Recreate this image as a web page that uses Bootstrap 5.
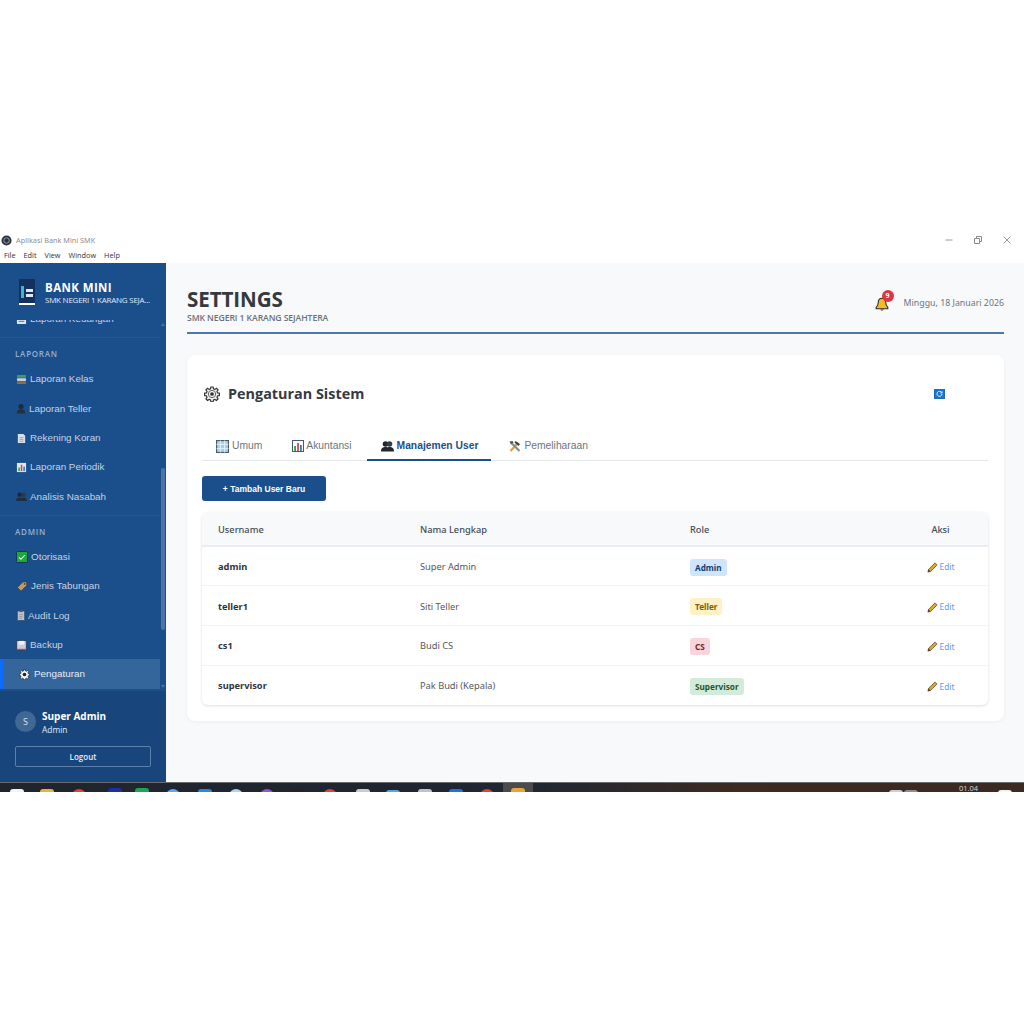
<!DOCTYPE html>
<html lang="en">
<head>
    <meta charset="UTF-8">
    <meta name="viewport" content="width=device-width, initial-scale=1.0">
    <title>Aplikasi Bank Mini SMK</title>
    <link href="https://cdn.jsdelivr.net/npm/bootstrap@5.3.3/dist/css/bootstrap.min.css" rel="stylesheet">
    <style>
        html, body { height: 1024px; overflow: hidden; background: #fff; }
        body { font-family: "Noto Sans", "Open Sans", sans-serif; padding-top: 233px; }
        .win-frame { height: 559px; width: 1024px; overflow: hidden; }

        /* window title + menu */
        .title-row { height: 14px; padding-left: 1px; font-size: 7.3px; color: #8d8f93; }
        .win-btns { gap: 19px; padding-right: 12px; color: #8a8a8a; }
        .menu-row { height: 16px; padding-left: 4px; gap: 8px; font-size: 7.3px; color: #333; font-family: "Open Sans", sans-serif; }

        .app-body { height: 519px; }
        .side-panel { width: 166px; background: #1a4f8b; color: #fff; flex-shrink: 0; }
        .side-head { height: 57px; padding: 16px 0 0 19px; gap: 10px; position: relative; z-index: 1; background: #1a4f8b; }
        .brand-name { font-size: 11.5px; font-weight: 700; letter-spacing: .4px; line-height: 13px; font-family: "Open Sans", sans-serif; margin-top: 2px; }
        .brand-sub { font-size: 8px; line-height: 10px; color: #e3eaf3; white-space: nowrap; font-family: "Open Sans", sans-serif; margin-top: 1px; letter-spacing: -.24px; }
        .side-scroll { height: 370px; overflow: hidden; justify-content: flex-end; }
        .side-group { border-bottom: 1px solid #24588f; padding-bottom: 4px; margin-right: 6px; flex-shrink: 0; }
        .side-group:last-child { border-bottom: 0; padding-bottom: 1px; }
        .side-label { font-size: 8px; font-weight: 600; letter-spacing: .75px; color: #98b0cd; padding: 10px 0 5px 15px; line-height: 11px; font-family: "Open Sans", sans-serif; }
        .side-link { display: flex; align-items: center; height: 29.35px; padding: 2px 0 0 16px; gap: 3px; font-size: 9.85px; color: #c4d2e4; text-decoration: none; font-family: "Liberation Sans", sans-serif; }
        .side-link.is-on { background: #34659b; border-left: 3px solid #0d6efd; padding: 0 0 0 16px; gap: 4px; height: 30px; color: #e6edf6; }
        .side-link.tight-gap { gap: 2px; }
        .scroll-thumb { position: absolute; right: 1px; top: 148px; width: 4px; height: 162px; background: #4a75a6; border-radius: 2px; }
        .scroll-up, .scroll-down { position: absolute; right: 1px; width: 0; height: 0; border-left: 2px solid transparent; border-right: 2px solid transparent; }
        .scroll-up { top: 3px; border-bottom: 3px solid #4a75a6; }
        .scroll-down { bottom: 2px; border-top: 3px solid #4a75a6; }
        .side-foot { height: 92px; background: #18467c; padding: 19px 5px 0 15px; border-top: 1px solid #1c4f88; }
        .user-row { gap: 6px; }
        .user-dot { width: 21px; height: 21px; border-radius: 50%; background: #3f6894; font-size: 9px; color: #d5e0ec; margin-top: 1px; }
        .user-name { font-size: 10px; font-weight: 700; line-height: 12px; font-family: "Open Sans", sans-serif; }
        .user-role { font-size: 8.400px; line-height: 11px; margin-top: 2px; color: #e3eaf3; font-family: "Open Sans", sans-serif; }
        .logout-btn { display: block; width: 136px; height: 21px; margin-top: 11px; padding: 0; font-size: 8px; font-weight: 600; line-height: 18px; color: #e8eef6; border: 1px solid #5a80ab; border-radius: 2px; background: transparent; font-family: "Open Sans", sans-serif; }

        .main-pane { background: #f8f9fb; padding: 24px 20px 0 21px; min-width: 0; }
        .page-top { height: 47px; border-bottom: 2px solid #5077a8; margin-bottom: 21px; }
        .page-title { font-size: 20.600px; font-weight: 700; line-height: 24px; color: #343a40; margin: 0; font-family: "Open Sans", sans-serif; letter-spacing: -.1px; }
        .page-sub { font-size: 8.650px; font-weight: 600; color: #6c7178; line-height: 11px; margin-top: 2px; letter-spacing: -.08px; font-family: "Open Sans", sans-serif; }
        .page-right { padding-bottom: 11px; }
        .date-txt { font-size: 8.800px; color: #6c757d; font-family: "Noto Sans", sans-serif; }
        .bell-wrap { position: relative; width: 14px; height: 15px; margin-right: 15px; }
        .bell-count { position: absolute; left: 7px; top: -7px; width: 12px; height: 12px; border-radius: 50%; background: #dc3545; color: #fff; font-size: 7px; font-weight: 700; line-height: 12px; text-align: center; }

        .panel-box { height: 366px; background: #fff; border-radius: 8px; box-shadow: 0 1px 4px rgba(0,0,0,.05); padding: 28px 16px 0 15px; }
        .panel-head { height: 22px; gap: 8px; padding-left: 2px; }
        .panel-title { font-size: 14.4px; font-weight: 700; color: #343a40; margin: 0; font-family: "Open Sans", sans-serif; }
        .refresh-ico { position: absolute; left: 732px; top: 6px; }
        .tab-row { margin-top: 30px; height: 26px; border-bottom: 1px solid #e4e7ea; }
        .tab-item { display: flex; align-items: center; gap: 3px; height: 26px; padding: 0 13px 4px 14px; font-size: 10.300px; color: #6c757d; font-family: "Liberation Sans", sans-serif; text-decoration: none; }
        .tab-item.is-on { color: #1a4f8b; font-weight: 700; border-bottom: 2px solid #1a4f8b; padding-bottom: 2px; }
        .tab-akun { padding-left: 17px; padding-right: 15px; gap: 2px; }
        .tab-rawat { padding-left: 18px; }
        .add-btn { width: 124px; height: 25px; margin-top: 15px; padding: 0; font-size: 8.5px; font-weight: 700; line-height: 24px; background: #1a4f8b; border: 0; border-radius: 3px; color: #fff; font-family: "Liberation Sans", sans-serif; }
        .add-btn:hover { background: #1a4f8b; }

        .user-table-wrap { margin-top: 11px; border-radius: 6px; box-shadow: 0 1px 3px rgba(0,0,0,.14); overflow: hidden; }
        .user-table { margin: 0; font-size: 9.250px; table-layout: fixed; color: #495057; }
        .col-uname { width: 202px; }
        .col-nama { width: 270px; }
        .col-role { width: 219px; }
        .user-table th { height: 34px; padding: 2px 0 0 16px; background: #f8f9fa; font-weight: 500; color: #454b52; border-bottom: 2px solid #e9edf2; vertical-align: middle; }
        .user-table td { height: 39.7px; padding: 2px 0 0 16px; vertical-align: middle; border-bottom: 1px solid #f3f4f6; color: #52585f; }
        .user-table tr:last-child td { border-bottom: 0; }
        .user-table .uname { font-weight: 700; color: #2f353b; }
        .user-table .aksi-cell { padding-left: 0; text-align: center; }
        .role-tag { display: inline-block; height: 17px; padding: 0 5px; line-height: 17px; font-size: 8.200px; font-weight: 700; border-radius: 3px; vertical-align: middle; }
        .tag-admin { background: #cfe4fd; color: #123f76; }
        .tag-teller { background: #fff1c6; color: #7d5d09; }
        .tag-cs { background: #f7d5da; color: #79222c; }
        .tag-super { background: #d3ecd9; color: #1e5630; }
        .edit-link { display: inline-flex; align-items: center; gap: 2px; font-size: 8.300px; color: #5d9bf5; text-decoration: none; vertical-align: middle; }

        .task-bar { height: 10px; overflow: hidden; background: linear-gradient(90deg, #20242c 0, #1f2733 52%, #3d2a20 72%, #3a2a22 100%); border-top: 1px solid #6b6b6b; position: relative; }
        .task-ico { position: absolute; top: 6px; width: 14px; height: 14px; border-radius: 3px 3px 0 0; }
        .round-ico { border-radius: 50%; }
        .task-on { position: absolute; left: 503px; top: 0; width: 30px; height: 10px; background: #4c4a4c; }
        .clock-txt { position: absolute; left: 959px; top: 1px; font-size: 7.5px; line-height: 9px; color: #d8d8d8; font-family: "Open Sans", sans-serif; }
    </style>
</head>
<body>
    <div class="win-frame d-flex flex-column">
        <!-- title bar -->
        <div class="title-row d-flex align-items-center justify-content-between">
            <div class="d-flex align-items-center gap-1">
                <svg width="11" height="11" viewBox="0 0 12 12"><circle cx="6" cy="6" r="5.5" fill="#2c3440"/><circle cx="6" cy="6" r="3" fill="none" stroke="#9aa5b3" stroke-width="1"/></svg>
                <span>Aplikasi Bank Mini SMK</span>
            </div>
            <div class="d-flex align-items-center win-btns">
                <svg width="10" height="10" viewBox="0 0 10 10"><path d="M1.5 5h7" stroke="#999" fill="none"/></svg>
                <svg width="10" height="10" viewBox="0 0 10 10"><path d="M1.5 3.5h5v5h-5zM3.5 3.5v-2h5v5h-2" stroke="#888" fill="none"/></svg>
                <svg width="10" height="10" viewBox="0 0 10 10"><path d="M1.5 1.5l7 7M8.5 1.5l-7 7" stroke="#999" fill="none"/></svg>
            </div>
        </div>
        <div class="menu-row d-flex align-items-center"><span>File</span><span>Edit</span><span>View</span><span>Window</span><span>Help</span></div>

        <div class="app-body d-flex">
            <!-- sidebar -->
            <aside class="side-panel d-flex flex-column">
                <div class="side-head d-flex">
                    <svg width="16" height="26" viewBox="0 0 16 26"><rect width="16" height="26" fill="#14305f"/><rect x="2" y="7" width="3" height="12" fill="#38b6d8"/><rect x="7" y="10" width="7" height="3" fill="#dfe7ef"/><rect x="7" y="15" width="7" height="3" fill="#dfe7ef"/><rect y="24" width="16" height="2" fill="#fff"/></svg>
                    <div>
                        <div class="brand-name">BANK MINI</div>
                        <div class="brand-sub">SMK NEGERI 1 KARANG SEJA...</div>
                    </div>
                </div>
                <div class="side-scroll d-flex flex-column position-relative">
                    <div class="scroll-up"></div>
                    <div class="scroll-thumb"></div>
                    <div class="scroll-down"></div>
                    <div class="side-group">
                        <a class="side-link" href="#">
                            <svg width="11" height="11" viewBox="0 0 12 12"><rect x="1" y="2" width="10" height="9" rx="1" fill="#dfe5ee"/><rect x="1" y="2" width="10" height="3" fill="#c0504d"/><path d="M3 8h6" stroke="#667"/></svg>
                            Laporan Keuangan
                        </a>
                    </div>
                    <div class="side-group">
                        <div class="side-label">LAPORAN</div>
                        <a class="side-link" href="#">
                            <svg width="11" height="11" viewBox="0 0 12 12"><rect x="1" y="1" width="10" height="3" rx="1" fill="#3e9a6b"/><rect x="1" y="4.5" width="10" height="3" rx="1" fill="#c8cfd8"/><rect x="1" y="8" width="10" height="3" rx="1" fill="#8a6d4b"/></svg>
                            Laporan Kelas
                        </a>
                        <a class="side-link" href="#">
                            <svg width="10" height="11" viewBox="0 0 12 12"><circle cx="6" cy="3.6" r="3" fill="#1d2a3a"/><path d="M1 12c0-4 2-5 5-5s5 1 5 5z" fill="#26303d"/></svg>
                            Laporan Teller
                        </a>
                        <a class="side-link" href="#">
                            <svg width="11" height="11" viewBox="0 0 12 12"><path d="M2 1h6l2 2v8H2z" fill="#d9dfe8"/><path d="M4 5h4M4 7h4M4 9h4" stroke="#8794a5" stroke-width=".8"/></svg>
                            Rekening Koran
                        </a>
                        <a class="side-link" href="#">
                            <svg width="11" height="11" viewBox="0 0 12 12"><rect x="1" y="1" width="10" height="10" fill="#e4e8ee"/><rect x="2.500" y="6" width="1.700" height="4" fill="#2e9e5b"/><rect x="5.200" y="3" width="1.700" height="7" fill="#d04a4a"/><rect x="8" y="5" width="1.700" height="5" fill="#2f7bd0"/></svg>
                            Laporan Periodik
                        </a>
                        <a class="side-link" href="#">
                            <svg width="11" height="11" viewBox="0 0 12 12"><circle cx="4" cy="4" r="2.400" fill="#1c2735"/><circle cx="8" cy="4" r="2.400" fill="#2b3747"/><path d="M0 11c0-3 2-4 4-4s4 1 4 4zM5 11c0-3 1-4 3-4s4 1 4 4z" fill="#232e3c"/></svg>
                            Analisis Nasabah
                        </a>
                    </div>
                    <div class="side-group">
                        <div class="side-label">ADMIN</div>
                        <a class="side-link" href="#">
                            <svg width="12" height="12" viewBox="0 0 12 12"><rect x=".5" y=".5" width="11" height="11" rx="1" fill="#1ca83c" stroke="#123a56"/><path d="M3 6.300l2 2 4-4.300" stroke="#fff" stroke-width="1.100" fill="none"/></svg>
                            Otorisasi
                        </a>
                        <a class="side-link" href="#">
                            <svg width="12" height="11" viewBox="0 0 12 12"><path d="M1 7l6-6h4v4l-6 6z" fill="#c49a5e" stroke="#333" stroke-width=".6"/><circle cx="8.800" cy="3.200" r="1" fill="#1a4f8b"/></svg>
                            Jenis Tabungan
                        </a>
                        <a class="side-link tight-gap" href="#">
                            <svg width="10" height="11" viewBox="0 0 10 12"><rect x="1" y="1" width="8" height="10.500" rx="1" fill="#b9c2cd" stroke="#2c3a4d" stroke-width=".7"/><rect x="3" y=".3" width="4" height="2" fill="#56606d"/><path d="M3 5h4M3 7h4M3 9h3" stroke="#7f8a98" stroke-width=".7"/></svg>
                            Audit Log
                        </a>
                        <a class="side-link" href="#">
                            <svg width="11" height="11" viewBox="0 0 12 12"><rect x=".7" y=".7" width="10.600" height="10.600" rx="1" fill="#c8cedb" stroke="#1d2c43" stroke-width=".8"/><rect x="3" y="1" width="6" height="4" fill="#eef1f5"/><rect x="1" y="9.600" width="10" height="1.400" fill="#b2457d"/></svg>
                            Backup
                        </a>
                        <a class="side-link is-on" href="#">
                            <svg width="11" height="11" viewBox="0 0 24 24"><path d="M10.300 1.500h3.400l.5 2.700 2.200.9 2.300-1.600 2.400 2.400-1.600 2.300.9 2.200 2.700.5v3.400l-2.700.5-.9 2.200 1.600 2.300-2.400 2.400-2.300-1.600-2.200.9-.5 2.700h-3.400l-.5-2.700-2.200-.9-2.300 1.600-2.400-2.400 1.600-2.300-.9-2.200-2.700-.5v-3.400l2.700-.5.9-2.200-1.600-2.300 2.400-2.400 2.300 1.600 2.200-.9z" fill="#f3f4f6" stroke="#222" stroke-width="1.500"/><circle cx="12" cy="12" r="4" fill="#222"/></svg>
                            Pengaturan
                        </a>
                    </div>
                </div>
                <div class="side-foot">
                    <div class="d-flex align-items-start user-row">
                        <div class="user-dot d-flex align-items-center justify-content-center">S</div>
                        <div>
                            <div class="user-name">Super Admin</div>
                            <div class="user-role">Admin</div>
                        </div>
                    </div>
                    <button class="logout-btn" type="button">Logout</button>
                </div>
            </aside>

            <!-- main content -->
            <main class="main-pane flex-grow-1">
                <div class="page-top d-flex justify-content-between">
                    <div>
                        <h1 class="page-title">SETTINGS</h1>
                        <div class="page-sub">SMK NEGERI 1 KARANG SEJAHTERA</div>
                    </div>
                    <div class="d-flex align-items-center page-right">
                        <div class="bell-wrap">
                            <svg class="d-block" width="14" height="15" viewBox="0 0 16 18"><path d="M8 1.500c-3 0-4.500 2.300-4.500 5 0 3-1 4.500-2.500 6v1.500h14v-1.500c-1.500-1.500-2.500-3-2.500-6 0-2.700-1.500-5-4.500-5z" fill="#f5b921" stroke="#2a2a2a" stroke-width="1.300"/><path d="M6 15c.3 1.500 3.700 1.500 4 0z" fill="#333"/></svg>
                            <span class="bell-count">9</span>
                        </div>
                        <span class="date-txt">Minggu, 18 Januari 2026</span>
                    </div>
                </div>

                <section class="panel-box">
                    <div class="panel-head d-flex align-items-center position-relative">
                        <svg width="16" height="16" viewBox="0 0 24 24"><path d="M10.300 1.500h3.400l.5 2.700 2.200.9 2.300-1.600 2.400 2.400-1.600 2.300.9 2.200 2.700.5v3.400l-2.700.5-.9 2.200 1.600 2.300-2.400 2.400-2.300-1.600-2.200.9-.5 2.700h-3.400l-.5-2.700-2.200-.9-2.300 1.600-2.400-2.400 1.600-2.300-.9-2.200-2.700-.5v-3.400l2.700-.5.9-2.200-1.600-2.300 2.400-2.400 2.300 1.600 2.200-.9z" fill="#f1f1f1" stroke="#333" stroke-width="1.800"/><circle cx="12" cy="12" r="5.500" fill="none" stroke="#666" stroke-width="1.500"/><circle cx="12" cy="12" r="2.800" fill="#333"/></svg>
                        <h2 class="panel-title">Pengaturan Sistem</h2>
                        <svg class="refresh-ico" width="11" height="10" viewBox="0 0 11 10"><rect width="11" height="10" fill="#1277d6" stroke="#555" stroke-width=".6"/><path d="M7.700 3.600a2.500 2.500 0 1 0 .3 1.400M8 2.300v1.700H6.300" fill="none" stroke="#e5f1fc" stroke-width="1"/></svg>
                    </div>

                    <div class="tab-row d-flex">
                        <a class="tab-item" href="#">
                            <svg width="13" height="13" viewBox="0 0 12 12"><rect x=".5" y=".5" width="11" height="11" fill="#9fd0ee" stroke="#4a5a68"/><path d="M.5 4h11M.5 8h11M4 .5v11M8 .5v11" stroke="#eef7fc" stroke-width=".8"/></svg>
                            Umum
                        </a>
                        <a class="tab-item tab-akun" href="#">
                            <svg width="12" height="12" viewBox="0 0 12 12"><rect x=".5" y=".5" width="11" height="11" fill="#fafafa" stroke="#4a5a68"/><rect x="2.200" y="6" width="1.800" height="5" fill="#2e9e5b"/><rect x="5.100" y="3" width="1.800" height="8" fill="#d04a4a"/><rect x="8" y="5" width="1.800" height="6" fill="#2f7bd0"/></svg>
                            Akuntansi
                        </a>
                        <a class="tab-item is-on" href="#">
                            <svg width="13" height="12" viewBox="0 0 13 12"><circle cx="4.500" cy="4" r="2.800" fill="#20272f"/><circle cx="8.500" cy="4" r="2.800" fill="#343d47"/><path d="M0 11.500c0-3.500 2-4.500 4.500-4.500s4 1 4 4.500zM5 11.500c0-3.500 1-4.500 3.500-4.500s4.500 1 4.500 4.500z" fill="#20272f"/></svg>
                            Manajemen User
                        </a>
                        <a class="tab-item tab-rawat" href="#">
                            <svg width="12" height="12" viewBox="0 0 12 12"><path d="M1.500 11L9 3" stroke="#d9a43a" stroke-width="2.200"/><path d="M6.500 1l4.500 3-1.500 2-4-3.500z" fill="#3f3f3f"/><path d="M10.500 11L3 3.500" stroke="#8a8a8a" stroke-width="2.200"/><path d="M.5 1.500L3.500 1l1 1.500-2.500 2z" fill="#555"/></svg>
                            Pemeliharaan
                        </a>
                    </div>

                    <button class="btn add-btn" type="button">+ Tambah User Baru</button>

                    <div class="user-table-wrap">
                        <table class="table user-table">
                            <colgroup>
                                <col class="col-uname"><col class="col-nama"><col class="col-role"><col>
                            </colgroup>
                            <thead>
                                <tr><th>Username</th><th>Nama Lengkap</th><th>Role</th><th class="aksi-cell">Aksi</th></tr>
                            </thead>
                            <tbody id="user-rows"></tbody>
                        </table>
                    </div>
                </section>
            </main>
        </div>

        <!-- taskbar, mostly cut off in the capture -->
        <div class="task-bar" id="task-bar">
            <div class="task-on"></div>
            <span class="clock-txt">01.04</span>
        </div>
    </div>

    <script>
        const users = [
            ['admin', 'Super Admin', 'Admin', 'tag-admin'],
            ['teller1', 'Siti Teller', 'Teller', 'tag-teller'],
            ['cs1', 'Budi CS', 'CS', 'tag-cs'],
            ['supervisor', 'Pak Budi (Kepala)', 'Supervisor', 'tag-super']
        ];
        const pencil = '<svg width="11" height="11" viewBox="0 0 12 12"><path d="M1 11l.7-3L8.800 1l2.200 2.200L4 10.300z" fill="#e0a526" stroke="#5a4a38" stroke-width=".8"/><path d="M1 11l.7-3 2.300 2.300z" fill="#4b4038"/></svg>';
        document.getElementById('user-rows').innerHTML = users.map(u => `
            <tr>
                <td class="uname">${u[0]}</td>
                <td>${u[1]}</td>
                <td><span class="role-tag ${u[3]}">${u[2]}</span></td>
                <td class="aksi-cell"><a class="edit-link" href="#">${pencil}Edit</a></td>
            </tr>`).join('');

        // taskbar icons: left, colour, round, top
        const tasks = [[10,'#f4f4f4',0,6],[40,'#e8b23a',0,6],[72,'#e0432f',1,6],[108,'#1b2fa8',0,5],[135,'#1fa35c',0,5],[166,'#64a6ec',1,6],[198,'#2b88d8',0,6],[229,'#a9d5f2',1,6],[260,'#a04fd0',1,6],[291,'#2a211c',0,6],[323,'#e0432f',1,6],[356,'#c9ccd1',0,6],[386,'#58a6e0',0,7],[418,'#c0c4c8',0,6],[449,'#1a73e8',0,6],[480,'#e0432f',1,6],[511,'#e8a33c',0,5],[889,'#cfcfcf',0,7],[904,'#8f8f8f',0,7],[998,'#f4f4f4',0,7]];
        document.getElementById('task-bar').insertAdjacentHTML('beforeend', tasks.map(t =>
            `<div class="task-ico ${t[2] ? 'round-ico' : ''}" style="left:${t[0]}px;top:${t[3]}px;background:${t[1]}"></div>`).join(''));
    </script>
</body>
</html>
